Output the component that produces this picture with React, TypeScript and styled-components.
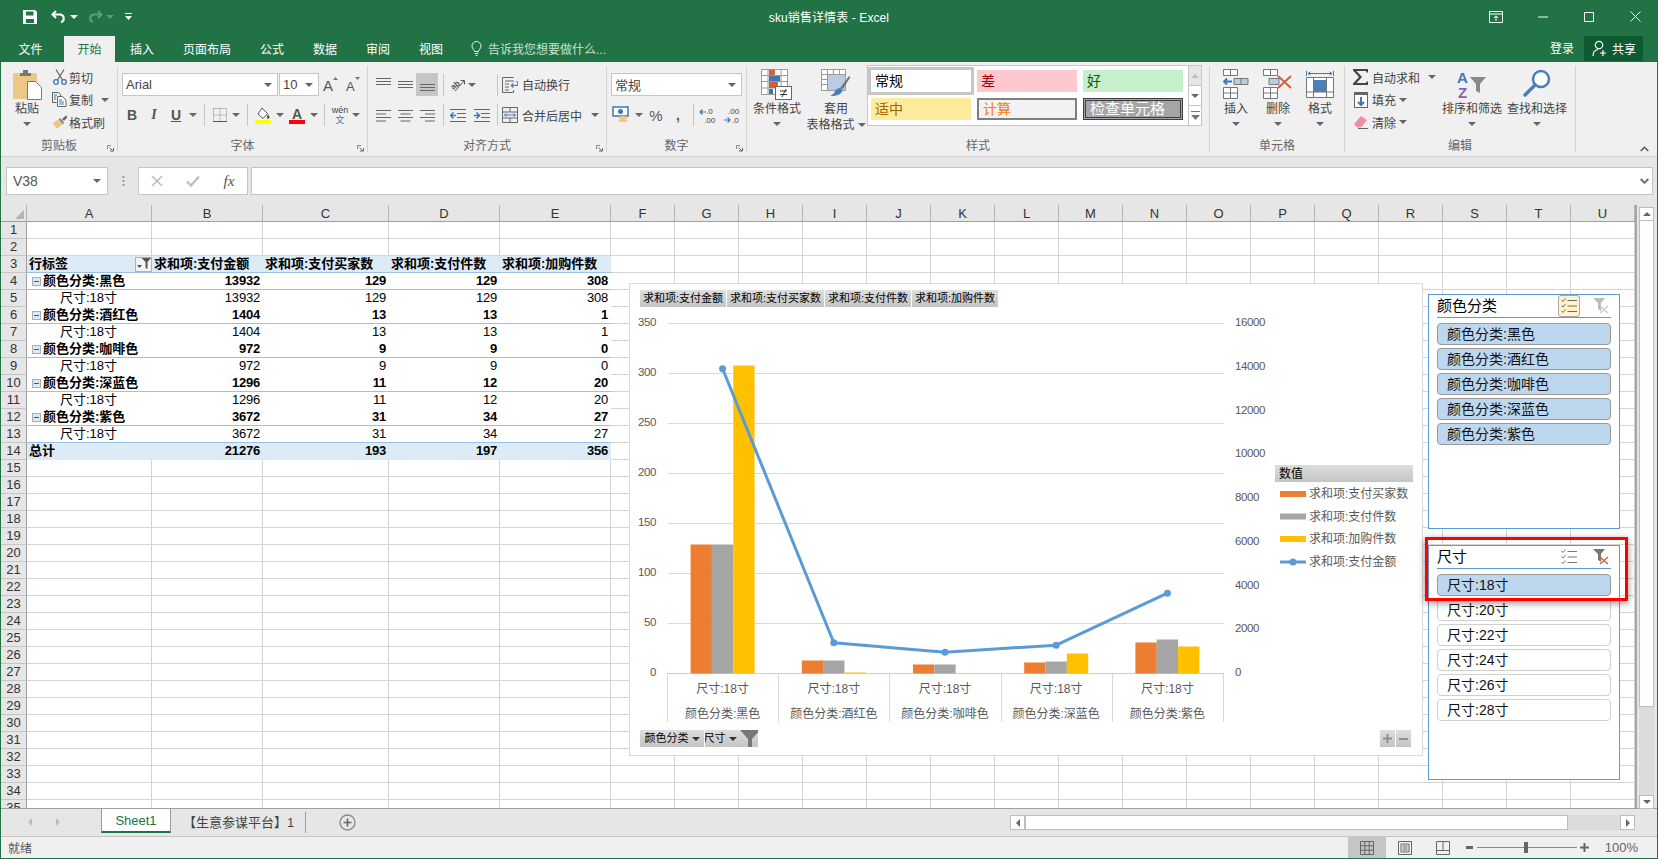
import React from 'react';
import styled, { createGlobalStyle } from 'styled-components';

const FONT = `"Liberation Sans", "Noto Sans CJK SC", sans-serif`;
const GREEN = '#217346';

const Global = createGlobalStyle`
  html, body { margin: 0; padding: 0; overflow: hidden; background: #fff; }
  #root { width: 1658px; height: 859px; }
  svg { display: block; flex-shrink: 0; }
`;

const Window = styled.div`
  width: 1658px; height: 859px; box-sizing: border-box;
  border: 1px solid ${GREEN};
  display: flex; flex-direction: column; overflow: hidden;
  font-family: ${FONT}; font-size: 12px; color: #444; background: #f0f0f0;
`;
const TitleBar = styled.div`
  height: 35px; box-sizing: border-box; padding-bottom: 4px; background: ${GREEN}; display: grid;
  grid-template-columns: 1fr auto 1fr; align-items: center;
`;
const Row = styled.div`display: flex; align-items: center;`;
const EndRow = styled(Row)`justify-content: flex-end; margin-right: -2px;`;
const Slot = styled.div<{ $w: number }>`
  width: ${p => p.$w}px; flex: none; display: flex; align-items: center; justify-content: center;
`;
const TallSlot = styled(Slot)`height: 26px;`;
const Title = styled.div`color: #fff; font-size: 12px; letter-spacing: .1px; white-space: nowrap;`;

const TabRow = styled.div`height: 26px; background: ${GREEN}; display: flex; align-items: stretch;`;
const RibbonTab = styled.div<{ $active?: boolean; $w: number; $ml?: number }>`
  width: ${p => p.$w}px; margin-left: ${p => p.$ml || 0}px; flex: none; box-sizing: border-box; padding-bottom: 2px;
  display: flex; align-items: center; justify-content: center;
  color: ${p => (p.$active ? GREEN : '#fff')};
  background: ${p => (p.$active ? '#f0f0f0' : 'transparent')};
`;
const TellMe = styled.div`display: flex; align-items: center; gap: 6px; margin-left: 14px; padding-bottom: 2px; color: #c6e3d0;`;
const Login = styled.div`margin-left: auto; color: #fff; align-self: center; padding-bottom: 3px;`;
const Share = styled.div`
  width: 59px; height: 25px; margin: 0 14px 1px 10px; background: #0f5b31; color: #fff;
  display: flex; align-items: center; gap: 3px; padding-left: 8px; box-sizing: border-box;
`;

const Ribbon = styled.div`
  height: 95px; box-sizing: border-box; border-bottom: 1px solid #d2d2d2; background: #f0f0f0;
  display: flex; align-items: flex-start; position: relative;
`;
const Group = styled.div<{ $w: number }>`
  width: ${p => p.$w}px; height: 86px; margin-top: 4px; box-sizing: border-box; flex: none;
  border-right: 1px solid #d4d4d4; display: flex; flex-direction: column; position: relative;
`;
const GroupBody = styled.div`flex: 1; display: flex; min-height: 0;`;
const GroupLabel = styled.div`
  height: 16px; line-height: 16px; text-align: center; color: #666; margin-bottom: -2px;
`;
const Launcher = styled.div`position: absolute; right: 3px; bottom: 0;`;
const Stack = styled.div<{ $pl: number }>`padding: 7px 0 0 ${p => p.$pl}px; display: flex; flex-direction: column; gap: 8px;`;
const ToolRow = styled.div<{ $h?: number }>`height: ${p => p.$h || 22}px; display: flex; align-items: center;`;
const Combo = styled.div<{ $w: number }>`
  width: ${p => p.$w}px; height: 23px; box-sizing: border-box; background: #fff; border: 1px solid #c6c6c6;
  display: flex; align-items: center; justify-content: space-between; padding: 0 5px 0 3px;
  font-size: 13px; color: #444; flex: none;
`;
const Sep = styled.div`width: 1px; height: 22px; background: #c6c6c6;`;
const ActiveSlot = styled(Slot)`height: 23px; background: #c6c6c6;`;
const BoldGlyph = styled.span`font-weight: 700; font-size: 14px; color: #555;`;
const ItalicGlyph = styled.span`font-style: italic; font-weight: 700; font-size: 14px; color: #555; font-family: "Liberation Serif", serif;`;
const UnderGlyph = styled.span`font-weight: 700; font-size: 14px; color: #555; text-decoration: underline;`;
const BigGlyph = styled.span`font-size: 15px; color: #555;`;
const ToolText = styled.span<{ $ml?: number }>`margin-left: ${p => p.$ml || 0}px; white-space: nowrap;`;
const CaretBox = styled.span<{ $ml: number }>`margin-left: ${p => p.$ml}px; display: inline-flex;`;

const BigBtn = styled.div<{ $w: number }>`
  width: ${p => p.$w}px; flex: none; display: flex; flex-direction: column; align-items: center; padding-top: 3px;
`;
const BigIcon = styled.div`height: 32px; display: flex; align-items: flex-start; justify-content: center;`;
const BigText = styled.div`height: 16px; line-height: 16px; white-space: nowrap; display: flex; align-items: center; gap: 3px;`;
const BigCaret = styled.div`height: 14px; display: flex; align-items: center;`;
const SmallCol = styled.div<{ $pl: number; $w: number }>`
  width: ${p => p.$w}px; box-sizing: border-box; padding-left: ${p => p.$pl}px; flex: none;
`;
const SmallRow = styled.div`height: 22.5px; display: flex; align-items: center;`;

const Gallery = styled.div`
  display: flex; height: 61px; margin: -1px 0 0 2px; box-sizing: border-box;
  border: 1px solid #c6c6c6; background: #fff; width: 335px;
`;
const StyleGrid = styled.div`
  width: 320px; box-sizing: border-box; padding: 4px 0 0 3px;
  display: grid; grid-template-columns: repeat(3, 100px); column-gap: 6px; row-gap: 6px; grid-auto-rows: 22px;
`;
const StyleCell = styled.div<{ $bg: string; $fg: string; $b?: string; $sel?: boolean; $big?: boolean }>`
  background: ${p => p.$bg}; color: ${p => p.$fg}; font-size: ${p => (p.$big ? 15 : 14)}px; line-height: 20px;
  padding-left: 4px; box-sizing: border-box; border: ${p => p.$b || 'none'};
  white-space: nowrap; overflow: hidden;
  display: flex; align-items: center;
  box-shadow: ${p => (p.$sel ? '0 0 0 3px #c6c6c6' : 'none')};
`;
const GalleryScroll = styled.div`display: flex; flex-direction: column; flex: 1; border-left: 1px solid #c6c6c6;`;
const ScrollCell = styled.div<{ $off?: boolean }>`
  flex: 1; display: flex; align-items: center; justify-content: center;
  background: ${p => (p.$off ? '#e6e6e6' : '#fff')}; border-bottom: 1px solid #c6c6c6;
  &:last-child { border-bottom: none; }
`;
const Collapse = styled.div`position: absolute; right: 8px; bottom: 4px;`;

const FormulaBar = styled.div`
  height: 48px; background: #e6e6e6; box-sizing: border-box; padding: 10px 0 0 5px; display: flex; align-items: flex-start;
`;
const NameBox = styled.div`
  width: 102px; height: 28px; box-sizing: border-box; background: #fff; border: 1px solid #c6c6c6;
  display: flex; align-items: center; justify-content: space-between; padding: 0 6px; font-size: 14px; color: #555;
`;
const Dots = styled.div`width: 30px; height: 28px; display: flex; align-items: center; justify-content: center;`;
const FxBox = styled.div`
  width: 110px; height: 28px; box-sizing: border-box; background: #fff; border: 1px solid #c6c6c6; display: flex; align-items: center;
`;
const FxText = styled.span`font-family: "Liberation Serif", serif; font-style: italic; font-size: 15px; color: #555;`;
const FormulaInput = styled.div`
  width: 1402px; height: 28px; margin-left: 3px; box-sizing: border-box; background: #fff; border: 1px solid #c6c6c6;
  display: flex; align-items: center; justify-content: flex-end; padding-right: 3px;
`;

const SheetArea = styled.div`height: 603px; display: flex; position: relative; background: #fff;`;
const Grid = styled.div`
  width: 1634px; flex: none; height: 603px; overflow: hidden; display: grid; align-content: start;
  grid-template-columns: 26px 125px 111px 126px 111px 111px repeat(16, 64px);
  grid-auto-rows: 17px;
`;
const ColHead = styled.div`
  box-sizing: border-box; background: #e6e6e6; border-right: 1px solid #b4b4b4; border-bottom: 1px solid #9f9f9f;
  font-size: 13px; color: #333; line-height: 17px; text-align: center;
`;
const Corner = styled(ColHead)`display: flex; align-items: flex-end; justify-content: flex-end; padding: 0 2px 2px 0;`;
const RowHead = styled.div`
  box-sizing: border-box; background: #e6e6e6; border-right: 1px solid #9f9f9f; border-bottom: 1px solid #c6c6c6;
  font-size: 13px; color: #333; line-height: 16px; text-align: center;
`;
const Cell = styled.div<{ $bg?: string; $line?: string; $bold?: boolean; $num?: boolean; $pivot?: boolean }>`
  box-sizing: border-box; background: ${p => p.$bg || '#fff'};
  border-right: ${p => (p.$pivot ? 'none' : '1px solid #d4d4d4')};
  border-bottom: 1px solid ${p => p.$line || '#d4d4d4'};
  font-size: 13px; color: #000; line-height: 16px; white-space: nowrap; overflow: hidden;
  font-weight: ${p => (p.$bold ? 700 : 400)};
  letter-spacing: ${p => (p.$num ? '-.2px' : '0')};
  padding: 0 ${p => (p.$num ? 3 : 0)}px 0 ${p => (p.$num ? 0 : 2)}px;
  display: flex; align-items: center; justify-content: ${p => (p.$num ? 'flex-end' : 'flex-start')};
`;
const HeadLabel = styled.span`padding-left: 0;`;
const FilterBtn = styled.span`
  margin-left: auto; margin-right: 0; width: 17px; height: 15px; box-sizing: border-box; flex: none;
  border: 1px solid #b0b0b0; background: #f4f4f4; display: flex; align-items: center; justify-content: center;
`;
const Expander = styled.span`
  width: 9px; height: 9px; box-sizing: border-box; border: 1px solid #9db2c6; background: #dfe7ef; margin: 0 2px 0 3px;
  display: inline-flex; align-items: center; justify-content: center; flex: none;
`;
const ExpanderBar = styled.span`width: 5px; height: 1px; background: #4a5a6a;`;
const Indent = styled.span`padding-left: 31px;`;

const VScroll = styled.div`
  width: 22px; flex: none; box-sizing: border-box; border-left: 2px solid #a6a6a6; background: #e6e6e6;
  padding: 2px 0 0 2px; display: flex; flex-direction: column;
`;
const ScrollBtn = styled.div`
  width: 15px; height: 14px; box-sizing: border-box; background: #fff; border: 1px solid #bdbdbd; flex: none;
  display: flex; align-items: center; justify-content: center;
`;
const HScrollBtn = styled(ScrollBtn)`height: 15px;`;
const VThumb = styled.div`width: 15px; height: 486px; box-sizing: border-box; background: #fff; border: 1px solid #bdbdbd; border-top: none; flex: none;`;
const VTrack = styled.div`width: 15px; height: 88px; background: #dcdcdc; flex: none;`;

const ChartFrame = styled.div`
  position: absolute; left: 628px; top: 78px; width: 794px; height: 473px; box-sizing: border-box;
  background: #fff; border: 1px solid #d9d9d9; display: flex; flex-direction: column;
`;
const FieldRow = styled.div`display: flex; gap: 1px; padding: 6px 0 0 10px;`;
const FieldBtn = styled.div<{ $w: number }>`
  width: ${p => p.$w}px; height: 17px; flex: none; box-sizing: border-box;
  background: linear-gradient(180deg, #dedede, #c4c4c4);
  font-size: 11px; line-height: 17px; color: #000; white-space: nowrap; display: flex; align-items: center; justify-content: center; gap: 3px; overflow: hidden;
`;
const ChartSvg = styled.svg`font-family: ${FONT}; font-size: 12px;`;
const ChartFoot = styled.div`display: flex; gap: 1px; padding-left: 10px; align-items: flex-start; padding-right: 11px;`;
const ZoomBtns = styled.div`margin-left: auto; display: flex; gap: 1px;`;

const Slicer = styled.div<{ $top: number }>`
  position: absolute; left: 1427px; top: ${p => p.$top}px; width: 192px; height: 235px; box-sizing: border-box;
  background: #fff; border: 1px solid #5b9bd5; padding: 0 8px;
`;
const SlicerHead = styled.div`
  height: 23px; box-sizing: border-box; border-bottom: 1px solid #5b9bd5; display: flex; align-items: center;
  font-size: 15px; color: #000; padding-right: 2px;
`;
const SlicerName = styled.span`margin-top: -4px; white-space: nowrap;`;
const SlicerMulti = styled.div<{ $on?: boolean }>`
  width: 22px; height: 22px; box-sizing: border-box; margin-left: auto; margin-right: 13px; border-radius: 3px;
  display: flex; align-items: center; justify-content: center;
  background: ${p => (p.$on ? '#fff2cc' : 'transparent')}; border: 1px solid ${p => (p.$on ? '#a9a9a9' : 'transparent')};
`;
const SlicerList = styled.div`display: flex; flex-direction: column; gap: 3px; margin-top: 5px;`;
const SlicerItem = styled.div<{ $on?: boolean }>`
  height: 22px; box-sizing: border-box; border-radius: 4px; padding-left: 9px; font-size: 14px; line-height: 20px; color: #111;
  border: 1px solid ${p => (p.$on ? '#9a9a9a' : '#d0d0d0')}; background: ${p => (p.$on ? '#bdd7ee' : '#fff')}; white-space: nowrap;
`;
const RedMark = styled.div`
  position: absolute; left: 1424px; top: 332px; width: 203px; height: 64px; box-sizing: border-box;
  border: 3px solid #ff0000; box-shadow: 0 2px 7px rgba(0,0,0,.45);
`;

const TabBar = styled.div`
  height: 28px; box-sizing: border-box; background: #e6e6e6; border-top: 1px solid #9f9f9f; display: flex; align-items: flex-start;
`;
const SheetTab = styled.div`
  margin-left: 4px; width: 70px; height: 24px; box-sizing: border-box; background: #fff; color: ${GREEN}; font-size: 13px;
  border-left: 1px solid #9f9f9f; border-right: 1px solid #9f9f9f; border-bottom: 2px solid ${GREEN};
  display: flex; align-items: center; justify-content: center;
`;
const OtherTab = styled.div`
  width: 134px; height: 24px; box-sizing: border-box; padding-left: 12px; color: #444; font-size: 13px; display: flex; align-items: center; white-space: nowrap; flex: none;
`;
const TabSep = styled.div`width: 1px; height: 21px; margin-top: 3px; background: #9f9f9f;`;
const HScroll = styled.div`margin-left: auto; margin-right: 22px; margin-top: 6px; display: flex; height: 15px;`;
const HThumb = styled.div`width: 543px; box-sizing: border-box; background: #fff; border: 1px solid #bdbdbd;`;
const HTrack = styled.div`width: 52px; background: #dcdcdc;`;

const StatusBar = styled.div`
  height: 22px; box-sizing: border-box; background: #f0f0f0; border-top: 1px solid #c6c6c6; display: flex; align-items: center; padding-left: 7px; color: #555;
`;
const StatusRight = styled.div`margin-left: auto; display: flex; align-items: center; height: 21px; padding-right: 19px;`;
const ViewBtn = styled.div<{ $on?: boolean }>`
  width: 38px; height: 21px; display: flex; align-items: center; justify-content: center; background: ${p => (p.$on ? '#c6c6c6' : 'transparent')};
`;
const ZoomTrack = styled.div`width: 100px; height: 1px; background: #8a8a8a; position: relative;`;
const ZoomThumb = styled.div`position: absolute; left: 47px; top: -5px; width: 4px; height: 11px; background: #666;`;
const ZoomText = styled.div`margin-left: 12px; font-size: 13px; color: #666;`;

/* ---- icons ---- */
const Caret = ({ c = '#666' }: { c?: string }) => (
  <svg width="8" height="4" viewBox="0 0 8 4"><path d="M0 0h8L4 4z" fill={c} /></svg>
);
const Save = () => (
  <svg width="16" height="16" viewBox="0 0 16 16"><path fillRule="evenodd" fill="#fff" d="M1 1h12l2 2v12H1zM4 2.500v4h7.500v-4zM4 10v4h8v-4z" /></svg>
);
const Undo = () => (
  <svg width="16" height="14" viewBox="0 0 16 14"><path d="M5 1 1.500 4.500 5 8M2 4.500h7a4 4 0 0 1 1 7.800" fill="none" stroke="#fff" strokeWidth="2" /></svg>
);
const Redo = () => (
  <svg width="16" height="14" viewBox="0 0 16 14" opacity={0.28}><path d="M11 1l3.500 3.500L11 8M14 4.500H7a4 4 0 0 0-1 7.800" fill="none" stroke="#fff" strokeWidth="2" /></svg>
);
const Customize = () => (
  <svg width="7" height="7" viewBox="0 0 7 7"><path d="M0 0h7v1H0zM0 3h7L3.500 7z" fill="#fff" /></svg>
);
const RibbonDisplay = () => (
  <svg width="14" height="12" viewBox="0 0 14 12"><path d="M.5.500h13v11H.5zM.5 3h13M7 10V5M4.800 7 7 4.800 9.200 7" fill="none" stroke="#fff" /></svg>
);
const Minimize = () => <svg width="10" height="10" viewBox="0 0 10 10"><path d="M0 5h10" stroke="#fff" /></svg>;
const Maximize = () => <svg width="10" height="10" viewBox="0 0 10 10"><path d="M.5.500h9v9h-9z" fill="none" stroke="#fff" /></svg>;
const Close = () => <svg width="11" height="11" viewBox="0 0 11 11"><path d="M.5.500l10 10M10.500.500l-10 10" stroke="#fff" /></svg>;
const Bulb = () => (
  <svg width="11" height="15" viewBox="0 0 11 15"><path d="M3.500 10.500C3.500 8.500 1 8 1 5a4.500 4.500 0 0 1 9 0c0 3-2.500 3.500-2.500 5.500zM3.800 12.500h3.400M4.500 14.500h2" fill="none" stroke="#e6f2ea" /></svg>
);
const ShareIcon = () => (
  <svg width="17" height="17" viewBox="0 0 17 17"><circle cx="7" cy="5" r="3.700" fill="none" stroke="#fff" strokeWidth="1.200" /><path d="M1 16c0-4 2-6 5-6.500M11 10v6M8 13h6" fill="none" stroke="#fff" strokeWidth="1.200" /></svg>
);
const Paste = () => (
  <svg width="29" height="31" viewBox="0 0 29 31">
    <rect x="0" y="4" width="24" height="26" rx="1.500" fill="#efc784" />
    <path d="M7 4h3V1h5v3h3v3H7z" fill="#777" />
    <path d="M14.500 12.500h8l6 6v12h-14z" fill="#fff" stroke="#777" />
  </svg>
);
const Scissors = () => (
  <svg width="14" height="16" viewBox="0 0 14 16">
    <circle cx="3" cy="13" r="2.300" fill="none" stroke="#3f76b4" strokeWidth="1.300" />
    <circle cx="11" cy="13" r="2.300" fill="none" stroke="#3f76b4" strokeWidth="1.300" />
    <path d="M4.500 11 11 .5M9.500 11 3 .5" stroke="#666" strokeWidth="1.300" />
  </svg>
);
const Copy = () => (
  <svg width="15" height="15" viewBox="0 0 15 15">
    <path d="M.5.500h6l2 2v3M.5.500v10h4" fill="none" stroke="#666" />
    <path d="M5.500 4.500h5l3.500 3.500v6.500H5.500z" fill="#fff" stroke="#666" />
    <path d="M7 8h3M7 10h5M7 12h5M2 3h3M2 5h2M2 7h2" stroke="#3f76b4" />
  </svg>
);
const Brush = () => (
  <svg width="16" height="14" viewBox="0 0 16 14">
    <path d="M1 7.500 7 4l4 5-5.500 4.500C4 13.500 1.500 10 1 7.500z" fill="#efc784" />
    <path d="M7 4l4 5 1-1-4-5zM10 4l4-3.500 1.500 1.500L12 6z" fill="#666" />
  </svg>
);
const FontGrow = () => (
  <svg width="22" height="17" viewBox="0 0 22 17">
    <text x="4" y="15" fontSize="15" fill="#555" fontFamily="Liberation Sans">A</text>
    <path d="M14 4l2.500-3L19 4z" fill="#4a7fb8" />
  </svg>
);
const FontShrink = () => (
  <svg width="22" height="17" viewBox="0 0 22 17">
    <text x="5" y="15" fontSize="13" fill="#555" fontFamily="Liberation Sans">A</text>
    <path d="M14 1l2.500 3L19 1z" fill="#4a7fb8" />
  </svg>
);
const Borders = () => (
  <svg width="14" height="14" viewBox="0 0 14 14">
    <path d="M.5.500h13v13M.5.500v13M7 .5v13M.5 7h13" fill="none" stroke="#888" strokeDasharray="1 1" />
    <path d="M0 13.500h14" stroke="#555" />
  </svg>
);
const FillColor = () => (
  <svg width="16" height="17" viewBox="0 0 16 17">
    <path d="M7 1l5.500 5.500-4.500 5L3 7z" fill="#fff" stroke="#555" />
    <path d="M13 7c1 1.500 1.500 2.500 1.500 3.500a1.300 1.300 0 0 1-2.600 0c0-1 .5-2 1.100-3.500z" fill="#555" />
    <rect y="13" width="16" height="4" fill="#ffff00" />
  </svg>
);
const FontColor = () => (
  <svg width="16" height="17" viewBox="0 0 16 17">
    <text x="3" y="12" fontSize="14" fontWeight="700" fill="#555" fontFamily="Liberation Sans">A</text>
    <rect y="13" width="16" height="4" fill="#ff0000" />
  </svg>
);
const Phonetic = () => (
  <svg width="18" height="18" viewBox="0 0 18 18" style={{ overflow: 'visible' }}>
    <text x="9" y="7" textAnchor="middle" fontSize="9" fill="#444" fontFamily="Liberation Sans">wén</text>
    <text x="9" y="17" textAnchor="middle" fontSize="9" fill="#3f76b4" fontFamily="Noto Sans CJK SC">文</text>
  </svg>
);
const AlignBars = ({ a, y }: { a: 'l' | 'c' | 'r'; y: number }) => {
  const ws = [15, 10, 15, 10];
  return (
    <svg width="15" height="13" viewBox="0 0 15 13">
      {ws.map((w, i) => (
        <rect key={i} x={a === 'l' ? 0 : a === 'c' ? (15 - w) / 2 : 15 - w} y={y + i * 3.5} width={w} height="1" fill="#666" />
      ))}
    </svg>
  );
};
const VBars = ({ y }: { y: number }) => (
  <svg width="15" height="13" viewBox="0 0 15 13">
    {[0, 3, 6].map(d => <rect key={d} x="0" y={y + d} width="15" height="1" fill="#666" />)}
  </svg>
);
const Orient = () => (
  <svg width="16" height="16" viewBox="0 0 16 16">
    <text x="1" y="11" fontSize="8" fontWeight="700" fill="#555" transform="rotate(-40 5 9)" fontFamily="Liberation Sans">ab</text>
    <path d="M5 14 14 4M10.500 3.500H14.500V7.500" fill="none" stroke="#555" />
  </svg>
);
const Indent1 = ({ rev }: { rev?: boolean }) => (
  <svg width="16" height="13" viewBox="0 0 16 13">
    <path d="M0 .5h16M7 4.500h9M7 8.500h9M0 12.500h16" stroke="#666" />
    {rev
      ? <path d="M0 6.500h5M2.500 3.500 5.500 6.500 2.500 9.500" fill="none" stroke="#3f76b4" strokeWidth="1.500" />
      : <path d="M1 6.500h5M3.500 3.500.5 6.500l3 3" fill="none" stroke="#3f76b4" strokeWidth="1.500" />}
  </svg>
);
const WrapIcon = () => (
  <svg width="16" height="16" viewBox="0 0 16 16">
    <path d="M.5.500h11M.5.500v15h11V13M3 4h9M3 7h4M3 10h4M3 13h4" fill="none" stroke="#666" />
    <path d="M9 8.500h5a1 1 0 0 0 0-4M9 8.500l2.500-2M9 8.500l2.500 2" fill="none" stroke="#3f76b4" strokeWidth="1.200" />
  </svg>
);
const MergeIcon = () => (
  <svg width="16" height="16" viewBox="0 0 16 16">
    <path d="M.5.500h15v15H.5zM.5 5h15M.5 11h15M8 .5V5M8 11v4.500" fill="none" stroke="#666" />
    <path d="M2.500 8h11M4.500 6.500 2.500 8l2 1.500M11.500 6.500l2 1.500-2 1.500" fill="none" stroke="#3f76b4" />
  </svg>
);
const Currency = () => (
  <svg width="18" height="18" viewBox="0 0 18 18">
    <rect x="1" y="1" width="15" height="9" fill="#fff" stroke="#3f76b4" strokeWidth="1.500" />
    <circle cx="8.500" cy="5.500" r="2.500" fill="#3f76b4" />
    <ellipse cx="11" cy="11.500" rx="4.500" ry="1.500" fill="#efc784" />
    <ellipse cx="11" cy="14.500" rx="4.500" ry="1.500" fill="#efc784" />
  </svg>
);
const DecMore = () => (
  <svg width="18" height="17" viewBox="0 0 18 17">
    <text x="7" y="7" fontSize="8" fill="#444" fontFamily="Liberation Sans">.0</text>
    <text x="5" y="16" fontSize="8" fill="#444" fontFamily="Liberation Sans">.00</text>
    <path d="M1 5h6M3.500 2.500 1 5l2.500 2.500" fill="none" stroke="#3f76b4" strokeWidth="1.200" />
  </svg>
);
const DecLess = () => (
  <svg width="18" height="17" viewBox="0 0 18 17">
    <text x="5" y="7" fontSize="8" fill="#444" fontFamily="Liberation Sans">.00</text>
    <text x="9" y="16" fontSize="8" fill="#444" fontFamily="Liberation Sans">.0</text>
    <path d="M1 13h6M4.500 10.500 7 13l-2.500 2.500" fill="none" stroke="#3f76b4" strokeWidth="1.200" />
  </svg>
);
const CondFormat = () => (
  <svg width="32" height="32" viewBox="0 0 32 32">
    <path d="M.5.500h26v25H.5zM7 .5v25M20 .5v25M.5 6.500h26M.5 12.500h26M.5 19h26" fill="#fff" stroke="#9a9a9a" />
    <rect x="8" y="1" width="6" height="5" fill="#d2603e" />
    <rect x="8" y="7" width="11" height="5" fill="#3f76b4" />
    <rect x="8" y="13" width="9" height="6" fill="#d2603e" />
    <rect x="8" y="20" width="4" height="5" fill="#3f76b4" />
    <rect x="14.500" y="17.500" width="16" height="13" fill="#fff" stroke="#666" />
    <path d="M19 22h7M19 25.500h7M25 20l-4 8" stroke="#333" />
  </svg>
);
const TableFormat = () => (
  <svg width="30" height="30" viewBox="0 0 30 30">
    <path d="M.5.500h24v21H.5zM6.500.5v21M12.500.5v21M18.500.5v21M.5 5.500h24M.5 10.500h24M.5 15.500h24" fill="#fff" stroke="#9a9a9a" />
    <rect x="7" y="6" width="17" height="15" fill="#b8cce4" />
    <path d="M19 19 28 7l1.500 1L22 20z" fill="#777" />
    <path d="M14 22c2-3 6-4 7-2s-1 5-4 6-5 1-8 1c2-1 4-2 5-5z" fill="#4a7fb8" />
  </svg>
);
const InsertCells = () => (
  <svg width="26" height="30" viewBox="0 0 26 30">
    <path d="M.5.500h14v6H.5zM7.500.5v6M.5 18.500h14v11H.5zM7.500 18.500v11M.5 24h14" fill="#fff" stroke="#777" />
    <path d="M11 9.500h14v6H11zM18 9.500v6" fill="#b8cce4" stroke="#777" />
    <path d="M9 12.500H1M4 9.500l-3 3 3 3" fill="none" stroke="#3f76b4" strokeWidth="1.800" />
  </svg>
);
const DeleteCells = () => (
  <svg width="30" height="30" viewBox="0 0 30 30">
    <path d="M.5.500h14v6H.5zM7.500.5v6M.5 18.500h14v11H.5zM7.500 18.500v11M.5 24h14" fill="#fff" stroke="#777" />
    <path d="M6 9.500h10v6H6z" fill="#b8cce4" stroke="#777" />
    <path d="M15 7l13 12M28 7 15 19" stroke="#d2603e" strokeWidth="2" />
  </svg>
);
const FormatCells = () => (
  <svg width="28" height="31" viewBox="0 0 28 31">
    <path d="M.5 2v5M27.500 2v5M2 4.500h24M2 4.500l2.500-1.500M2 4.500l2.500 1.500M26 4.500l-2.500-1.500M26 4.500l-2.500 1.500" fill="none" stroke="#3f76b4" />
    <path d="M.5 8.500h27v20H.5zM7.500 8.500v20M20.500 8.500v20M.5 23h27" fill="#fff" stroke="#777" />
    <rect x="8" y="11" width="12" height="12" fill="#4a7fb8" />
  </svg>
);
const Sigma = () => (
  <svg width="15" height="16" viewBox="0 0 15 16"><path d="M0 0h15v3.500h-1.500L13 2H3.500L9 8l-5.500 6H13l.5-1.500H15V16H0v-1.500L6 8 0 1.500z" fill="#444" /></svg>
);
const FillDown = () => (
  <svg width="14" height="16" viewBox="0 0 14 16">
    <rect x=".5" y=".5" width="13" height="15" fill="#fff" stroke="#666" />
    <rect width="14" height="3" fill="#666" />
    <path d="M7 5v8M4 10l3 3 3-3" fill="none" stroke="#3f76b4" strokeWidth="2" />
  </svg>
);
const Eraser = () => (
  <svg width="15" height="14" viewBox="0 0 15 14">
    <path d="M1 9l7-8 6 4-6 7.500H4z" fill="#ef8fa0" />
    <path d="M5 13.500h10" stroke="#666" />
  </svg>
);
const SortFilter = () => (
  <svg width="30" height="30" viewBox="0 0 30 30">
    <text x="0" y="14" fontSize="15" fontWeight="700" fill="#3f76b4" fontFamily="Liberation Sans">A</text>
    <text x="1" y="29" fontSize="15" fontWeight="700" fill="#8d5fb4" fontFamily="Liberation Sans">Z</text>
    <path d="M13 8h16l-6 7v9l-4-2v-7z" fill="#888" />
  </svg>
);
const FindIcon = () => (
  <svg width="28" height="30" viewBox="0 0 28 30">
    <circle cx="18" cy="10" r="8" fill="#fff" stroke="#4a7fb8" strokeWidth="2.500" />
    <path d="M12 16 2 26" stroke="#4a7fb8" strokeWidth="3.500" strokeLinecap="round" />
  </svg>
);
const LauncherIcon = () => (
  <svg width="7" height="7" viewBox="0 0 7 7"><path d="M.5 4V.5H4" fill="none" stroke="#888" /><path d="M2.500 2.500 6 6M3 6h3.500V3" fill="none" stroke="#666" /></svg>
);
const Chevron = () => (
  <svg width="9" height="6" viewBox="0 0 9 6"><path d="M.7 5 4.500 1.200 8.300 5" fill="none" stroke="#555" strokeWidth="1.500" /></svg>
);
const ChevronDown = () => (
  <svg width="9" height="6" viewBox="0 0 9 6"><path d="M.7 1 4.500 4.800 8.300 1" fill="none" stroke="#666" strokeWidth="1.800" /></svg>
);
const FilterDrop = () => (
  <svg width="14" height="12" viewBox="0 0 14 12"><path d="M4.500 0H14l-3.500 4v7l-2-1V4zM0 7h5L2.500 10z" fill="#555" /></svg>
);
const MultiSelect = ({ c = '#777' }: { c?: string }) => (
  <svg width="16" height="16" viewBox="0 0 16 16">
    <path d="M.5 2 2 3.500 4.500.5M.5 7.500 2 9l2.500-3M.5 13 2 14.500 4.500 11.500M6.500 2.500H16M6.500 8H16M6.500 13.500H16" fill="none" stroke={c} />
  </svg>
);
const ClearFilter = ({ on }: { on?: boolean }) => (
  <svg width="16" height="16" viewBox="0 0 16 16">
    <path d="M0 0h12L8 5v8L5 11V5z" fill={on ? '#777' : '#bbb'} />
    <path d="M7 8l8 7M15 8l-8 7" stroke={on ? '#d2603e' : '#ccc'} strokeWidth="1.400" />
  </svg>
);
const Triangle = ({ dir, c = '#666' }: { dir: 'u' | 'd' | 'l' | 'r'; c?: string }) => (
  <svg width="8" height="8" viewBox="0 0 8 8">
    <path fill={c} d={dir === 'u' ? 'M0 6h8L4 2z' : dir === 'd' ? 'M0 2h8L4 6z' : dir === 'l' ? 'M6 0v8L2 4z' : 'M2 0v8l4-4z'} />
  </svg>
);
const MoreDown = () => (
  <svg width="9" height="9" viewBox="0 0 9 9"><path d="M0 0h9v1H0zM0 4h9L4.500 9z" fill="#777" /></svg>
);
const CornerTri = () => <svg width="9" height="9" viewBox="0 0 9 9"><path d="M9 0v9H0z" fill="#b4b4b4" /></svg>;
const PlusCircle = () => (
  <svg width="17" height="17" viewBox="0 0 17 17"><circle cx="8.500" cy="8.500" r="7.500" fill="none" stroke="#8a8a8a" strokeWidth="1.300" /><path d="M4.500 8.500h8M8.500 4.500v8" stroke="#666" strokeWidth="1.600" /></svg>
);
const GridView = () => (
  <svg width="14" height="14" viewBox="0 0 14 14"><path d="M.5.500h13v13H.5zM4.800.5v13M9.200.5v13M.5 4.800h13M.5 9.200h13" fill="none" stroke="#666" /></svg>
);
const PageView = () => (
  <svg width="14" height="14" viewBox="0 0 14 14"><path d="M.5.500h13v13H.5zM3 3h8v8H3zM4.500 5h5M4.500 7h5M4.500 9h5" fill="none" stroke="#666" /></svg>
);
const BreakView = () => (
  <svg width="14" height="14" viewBox="0 0 14 14"><path d="M.5.500h13v13H.5zM.5 9.500h13M7 .5v9" fill="none" stroke="#666" /></svg>
);
const Minus = () => <svg width="7" height="3" viewBox="0 0 7 3"><rect width="7" height="3" fill="#666" /></svg>;
const Plus = () => <svg width="9" height="9" viewBox="0 0 9 9"><path d="M0 3.500h9v2H0zM3.500 0h2v9h-2z" fill="#666" /></svg>;
const ChartFunnel = () => (
  <svg width="20" height="17" viewBox="0 0 20 17"><path d="M0 0h20l-8 9v8H8V9z" fill="#777" /></svg>
);
const ZoomPlus = () => <svg width="9" height="9" viewBox="0 0 9 9"><path d="M0 3.500h9v2H0zM3.500 0h2v9h-2z" fill="#8f8f8f" /></svg>;
const ZoomMinus = () => <svg width="9" height="2" viewBox="0 0 9 2"><rect width="9" height="2" fill="#8f8f8f" /></svg>;

/* ---- data ---- */
const colNames = 'ABCDEFGHIJKLMNOPQRSTU'.split('');
type PivotRow = { label: string; kind: 'head' | 'group' | 'leaf' | 'total'; v: (string | number)[] };
const pivot: Record<number, PivotRow> = {
  3: { label: '行标签', kind: 'head', v: ['求和项:支付金额', '求和项:支付买家数', '求和项:支付件数', '求和项:加购件数'] },
  4: { label: '颜色分类:黑色', kind: 'group', v: [13932, 129, 129, 308] },
  5: { label: '尺寸:18寸', kind: 'leaf', v: [13932, 129, 129, 308] },
  6: { label: '颜色分类:酒红色', kind: 'group', v: [1404, 13, 13, 1] },
  7: { label: '尺寸:18寸', kind: 'leaf', v: [1404, 13, 13, 1] },
  8: { label: '颜色分类:咖啡色', kind: 'group', v: [972, 9, 9, 0] },
  9: { label: '尺寸:18寸', kind: 'leaf', v: [972, 9, 9, 0] },
  10: { label: '颜色分类:深蓝色', kind: 'group', v: [1296, 11, 12, 20] },
  11: { label: '尺寸:18寸', kind: 'leaf', v: [1296, 11, 12, 20] },
  12: { label: '颜色分类:紫色', kind: 'group', v: [3672, 31, 34, 27] },
  13: { label: '尺寸:18寸', kind: 'leaf', v: [3672, 31, 34, 27] },
  14: { label: '总计', kind: 'total', v: [21276, 193, 197, 356] },
};
const BLUE_LINE = '#9bc2e6';
const rowLine = (r: number) => ([3, 4, 6, 8, 10, 12, 13].includes(r) ? BLUE_LINE : r === 14 ? '#ddebf7' : '#fff');

const SheetCells = () => {
  const out: React.ReactNode[] = [];
  out.push(<Corner key="corner"><CornerTri /></Corner>);
  colNames.forEach(c => out.push(<ColHead key={c}>{c}</ColHead>));
  for (let r = 1; r <= 35; r++) {
    out.push(<RowHead key={`h${r}`}>{r}</RowHead>);
    const p = pivot[r];
    colNames.forEach((c, i) => {
      const key = `${c}${r}`;
      if (p && i < 5) {
        const bg = p.kind === 'head' || p.kind === 'total' ? '#ddebf7' : '#fff';
        const bold = p.kind !== 'leaf';
        if (i === 0) {
          out.push(
            <Cell key={key} $pivot $bg={bg} $line={rowLine(r)} $bold={bold}>
              {p.kind === 'group' && <Expander><ExpanderBar /></Expander>}
              {p.kind === 'leaf' ? <Indent>{p.label}</Indent> : <HeadLabel>{p.label}</HeadLabel>}
              {p.kind === 'head' && <FilterBtn><FilterDrop /></FilterBtn>}
            </Cell>
          );
        } else {
          out.push(
            <Cell key={key} $pivot $bg={bg} $line={rowLine(r)} $bold={bold} $num={p.kind !== 'head'}>
              {p.v[i - 1]}
            </Cell>
          );
        }
      } else {
        out.push(<Cell key={key} />);
      }
    });
  }
  return <>{out}</>;
};

/* ---- chart ---- */
const cats = ['颜色分类:黑色', '颜色分类:酒红色', '颜色分类:咖啡色', '颜色分类:深蓝色', '颜色分类:紫色'];
const bars = [[129, 129, 308], [13, 13, 1], [9, 9, 0], [11, 12, 20], [31, 34, 27]];
const line = [13932, 1404, 972, 1296, 3672];
const barColors = ['#ed7d31', '#a5a5a5', '#ffc000'];
const X0 = 667, CW = 111.2, BASE = 673.5;
const center = (i: number) => X0 + CW * i + CW / 2;
const lineY = (v: number) => BASE - (v * 350) / 16000;
const legend = ['求和项:支付买家数', '求和项:支付件数', '求和项:加购件数', '求和项:支付金额'];

const Plot = () => (
  <ChartSvg width="792" height="423" viewBox="630 307 792 423">
    <defs>
      <linearGradient id="lg" x1="0" x2="0" y1="0" y2="1">
        <stop offset="0" stopColor="#dedede" /><stop offset="1" stopColor="#c4c4c4" />
      </linearGradient>
    </defs>
    {[0, 1, 2, 3, 4, 5, 6].map(i => (
      <line key={i} x1="668" x2="1224" y1={323.5 + i * 50} y2={323.5 + i * 50} stroke="#d9d9d9" />
    ))}
    <line x1="667" x2="1224" y1={BASE} y2={BASE} stroke="#d0d0d0" />
    {[0, 1, 2, 3, 4, 5].map(i => (
      <line key={i} x1={Math.round(X0 + CW * i) + 0.5} x2={Math.round(X0 + CW * i) + 0.5} y1="674" y2="722" stroke="#d9d9d9" />
    ))}
    {[350, 300, 250, 200, 150, 100, 50, 0].map((v, i) => (
      <text key={v} x="656" y={326 + i * 50} textAnchor="end" fontSize="11.5" letterSpacing="-.4" fill="#595959">{v}</text>
    ))}
    {[16000, 14000, 12000, 10000, 8000, 6000, 4000, 2000, 0].map((v, i) => (
      <text key={v} x="1235" y={326 + i * 43.75} fontSize="11.5" letterSpacing="-.4" fill="#595959">{v}</text>
    ))}
    {bars.map((g, i) => g.map((v, j) => (
      <rect key={`${i}${j}`} x={center(i) - 32 + j * 21.33} y={BASE - v} width="21.33" height={v} fill={barColors[j]} />
    )))}
    <polyline points={line.map((v, i) => `${center(i)},${lineY(v)}`).join(' ')} fill="none" stroke="#5b9bd5" strokeWidth="3" strokeLinejoin="round" />
    {line.map((v, i) => <circle key={i} cx={center(i)} cy={lineY(v)} r="3.5" fill="#5b9bd5" />)}
    {cats.map((c, i) => (
      <g key={c} fill="#595959" textAnchor="middle">
        <text x={center(i)} y="693">尺寸:18寸</text>
        <text x={center(i)} y="718">{c}</text>
      </g>
    ))}
    <rect x="1275" y="465" width="138" height="17" fill="url(#lg)" />
    <text x="1279" y="478" fill="#000">数值</text>
    {legend.map((t, i) => (
      <g key={t}>
        {i < 3
          ? <rect x="1280" y={491 + i * 22.5} width="26" height="6" fill={barColors[i]} />
          : <><line x1="1280" x2="1306" y1="562" y2="562" stroke="#5b9bd5" strokeWidth="3" /><circle cx="1293" cy="562" r="3.5" fill="#5b9bd5" /></>}
        <text x="1309" y={498 + i * 22.5} fill="#595959">{t}</text>
      </g>
    ))}
  </ChartSvg>
);

const Group1 = () => (
  <Group $w={117}>
    <GroupBody>
      <BigBtn $w={52}>
        <BigIcon><Paste /></BigIcon>
        <BigText>粘贴</BigText>
        <BigCaret><Caret /></BigCaret>
      </BigBtn>
      <SmallCol $pl={0} $w={64}>
        <SmallRow><Slot $w={13}><Scissors /></Slot><ToolText $ml={3}>剪切</ToolText></SmallRow>
        <SmallRow><Slot $w={13}><Copy /></Slot><ToolText $ml={3}>复制</ToolText><CaretBox $ml={8}><Caret /></CaretBox></SmallRow>
        <SmallRow><Slot $w={13}><Brush /></Slot><ToolText $ml={3}>格式刷</ToolText></SmallRow>
      </SmallCol>
    </GroupBody>
    <GroupLabel>剪贴板</GroupLabel>
    <Launcher><LauncherIcon /></Launcher>
  </Group>
);

const Group2 = () => (
  <Group $w={250}>
    <GroupBody>
      <Stack $pl={4}>
        <ToolRow $h={23}>
          <Combo $w={156}>Arial<Caret /></Combo>
          <Slot $w={1} />
          <Combo $w={40}>10<Caret /></Combo>
          <Slot $w={22}><FontGrow /></Slot>
          <Slot $w={22}><FontShrink /></Slot>
        </ToolRow>
        <ToolRow>
          <Slot $w={20}><BoldGlyph>B</BoldGlyph></Slot>
          <Slot $w={24}><ItalicGlyph>I</ItalicGlyph></Slot>
          <Slot $w={20}><UnderGlyph>U</UnderGlyph></Slot>
          <Slot $w={14}><Caret /></Slot>
          <Slot $w={8}><Sep /></Slot>
          <Slot $w={24}><Borders /></Slot>
          <Slot $w={8}><Caret /></Slot>
          <Slot $w={15}><Sep /></Slot>
          <Slot $w={16}><FillColor /></Slot>
          <Slot $w={18}><Caret /></Slot>
          <Slot $w={16}><FontColor /></Slot>
          <Slot $w={18}><Caret /></Slot>
          <Slot $w={2}><Sep /></Slot>
          <Slot $w={30}><Phonetic /></Slot>
          <Slot $w={2}><Caret /></Slot>
        </ToolRow>
      </Stack>
    </GroupBody>
    <GroupLabel>字体</GroupLabel>
    <Launcher><LauncherIcon /></Launcher>
  </Group>
);

const Group3 = () => (
  <Group $w={239}>
    <GroupBody>
      <Stack $pl={4}>
        <ToolRow $h={23}>
          <Slot $w={22}><VBars y={0} /></Slot>
          <Slot $w={22}><VBars y={3} /></Slot>
          <ActiveSlot $w={22}><VBars y={6} /></ActiveSlot>
          <Slot $w={10}><Sep /></Slot>
          <Slot $w={20}><Orient /></Slot>
          <Slot $w={8}><Caret /></Slot>
          <Slot $w={20} />
          <Slot $w={2}><Sep /></Slot>
          <Slot $w={24}><WrapIcon /></Slot>
          <ToolText>自动换行</ToolText>
        </ToolRow>
        <ToolRow>
          <Slot $w={22}><AlignBars a="l" y={1} /></Slot>
          <Slot $w={22}><AlignBars a="c" y={1} /></Slot>
          <Slot $w={22}><AlignBars a="r" y={1} /></Slot>
          <Slot $w={10}><Sep /></Slot>
          <Slot $w={20}><Indent1 /></Slot>
          <Slot $w={28}><Indent1 rev /></Slot>
          <Slot $w={2}><Sep /></Slot>
          <Slot $w={24}><MergeIcon /></Slot>
          <ToolText>合并后居中</ToolText>
          <Slot $w={25}><Caret /></Slot>
        </ToolRow>
      </Stack>
    </GroupBody>
    <GroupLabel>对齐方式</GroupLabel>
    <Launcher><LauncherIcon /></Launcher>
  </Group>
);

const Group4 = () => (
  <Group $w={140}>
    <GroupBody>
      <Stack $pl={4}>
        <ToolRow $h={23}><Combo $w={131}>常规<Caret /></Combo></ToolRow>
        <ToolRow>
          <Slot $w={20}><Currency /></Slot>
          <Slot $w={15}><Caret /></Slot>
          <Slot $w={20}><BigGlyph>%</BigGlyph></Slot>
          <Slot $w={24}><BoldGlyph>,</BoldGlyph></Slot>
          <Slot $w={7}><Sep /></Slot>
          <Slot $w={22}><DecMore /></Slot>
          <Slot $w={26}><DecLess /></Slot>
        </ToolRow>
      </Stack>
    </GroupBody>
    <GroupLabel>数字</GroupLabel>
    <Launcher><LauncherIcon /></Launcher>
  </Group>
);

const Group5 = () => (
  <Group $w={463}>
    <GroupBody>
      <BigBtn $w={60}>
        <BigIcon><CondFormat /></BigIcon>
        <BigText>条件格式</BigText>
        <BigCaret><Caret /></BigCaret>
      </BigBtn>
      <BigBtn $w={58}>
        <BigIcon><TableFormat /></BigIcon>
        <BigText>套用</BigText>
        <BigText>表格格式<Caret /></BigText>
      </BigBtn>
      <Gallery>
        <StyleGrid>
          <StyleCell $bg="#fff" $fg="#000" $sel>常规</StyleCell>
          <StyleCell $bg="#ffc7ce" $fg="#9c0006">差</StyleCell>
          <StyleCell $bg="#c6efce" $fg="#006100">好</StyleCell>
          <StyleCell $bg="#ffeb9c" $fg="#9c6500">适中</StyleCell>
          <StyleCell $bg="#f2f2f2" $fg="#fa7d00" $b="2px solid #7f7f7f">计算</StyleCell>
          <StyleCell $bg="#a5a5a5" $fg="#fff" $b="3px double #3f3f3f" $big>检查单元格</StyleCell>
        </StyleGrid>
        <GalleryScroll>
          <ScrollCell $off><Triangle dir="u" c="#bdbdbd" /></ScrollCell>
          <ScrollCell><Triangle dir="d" /></ScrollCell>
          <ScrollCell><MoreDown /></ScrollCell>
        </GalleryScroll>
      </Gallery>
    </GroupBody>
    <GroupLabel>样式</GroupLabel>
  </Group>
);

const Group6 = () => (
  <Group $w={135}>
    <GroupBody>
      <Slot $w={5} />
      <BigBtn $w={42}><BigIcon><InsertCells /></BigIcon><BigText>插入</BigText><BigCaret><Caret /></BigCaret></BigBtn>
      <BigBtn $w={42}><BigIcon><DeleteCells /></BigIcon><BigText>删除</BigText><BigCaret><Caret /></BigCaret></BigBtn>
      <BigBtn $w={42}><BigIcon><FormatCells /></BigIcon><BigText>格式</BigText><BigCaret><Caret /></BigCaret></BigBtn>
    </GroupBody>
    <GroupLabel>单元格</GroupLabel>
  </Group>
);

const Group7 = () => (
  <Group $w={231}>
    <GroupBody>
      <SmallCol $pl={8} $w={96}>
        <SmallRow><Slot $w={15}><Sigma /></Slot><ToolText $ml={4}>自动求和</ToolText><CaretBox $ml={8}><Caret /></CaretBox></SmallRow>
        <SmallRow><Slot $w={15}><FillDown /></Slot><ToolText $ml={4}>填充</ToolText><CaretBox $ml={3}><Caret /></CaretBox></SmallRow>
        <SmallRow><Slot $w={15}><Eraser /></Slot><ToolText $ml={4}>清除</ToolText><CaretBox $ml={3}><Caret /></CaretBox></SmallRow>
      </SmallCol>
      <BigBtn $w={62}><BigIcon><SortFilter /></BigIcon><BigText>排序和筛选</BigText><BigCaret><Caret /></BigCaret></BigBtn>
      <BigBtn $w={68}><BigIcon><FindIcon /></BigIcon><BigText>查找和选择</BigText><BigCaret><Caret /></BigCaret></BigBtn>
    </GroupBody>
    <GroupLabel>编辑</GroupLabel>
  </Group>
);

const colors = ['黑色', '酒红色', '咖啡色', '深蓝色', '紫色'];
const sizes = ['18', '20', '22', '24', '26', '28'];

export default function App() {
  return (
    <>
      <Global />
      <Window>
        <TitleBar>
          <Row>
            <Slot $w={21} />
            <Slot $w={16}><Save /></Slot>
            <Slot $w={13} />
            <Slot $w={16}><Undo /></Slot>
            <Slot $w={14}><Caret c="#fff" /></Slot>
            <Slot $w={6} />
            <Slot $w={16}><Redo /></Slot>
            <Slot $w={14}><Caret c="#5f9a78" /></Slot>
            <Slot $w={6} />
            <Slot $w={11}><Customize /></Slot>
          </Row>
          <Title>sku销售详情表 - Excel</Title>
          <EndRow>
            <Slot $w={46.5}><RibbonDisplay /></Slot>
            <Slot $w={46.5}><Minimize /></Slot>
            <Slot $w={46.5}><Maximize /></Slot>
            <Slot $w={46.5}><Close /></Slot>
          </EndRow>
        </TitleBar>
        <TabRow>
          <RibbonTab $w={59}>文件</RibbonTab>
          <RibbonTab $w={51} $ml={4} $active>开始</RibbonTab>
          <RibbonTab $w={54}>插入</RibbonTab>
          <RibbonTab $w={76}>页面布局</RibbonTab>
          <RibbonTab $w={54}>公式</RibbonTab>
          <RibbonTab $w={52}>数据</RibbonTab>
          <RibbonTab $w={54}>审阅</RibbonTab>
          <RibbonTab $w={52}>视图</RibbonTab>
          <TellMe><Bulb />告诉我您想要做什么...</TellMe>
          <Login>登录</Login>
          <Share><ShareIcon />共享</Share>
        </TabRow>
        <Ribbon>
          <Group1 />
          <Group2 />
          <Group3 />
          <Group4 />
          <Group5 />
          <Group6 />
          <Group7 />
          <Collapse><Chevron /></Collapse>
        </Ribbon>
        <FormulaBar>
          <NameBox>V38<Caret /></NameBox>
          <Dots><svg width="3" height="10" viewBox="0 0 3 10"><path d="M1.500 0v2M1.500 4v2M1.500 8v2" stroke="#999" strokeWidth="2" /></svg></Dots>
          <FxBox>
            <Slot $w={36}><svg width="12" height="12" viewBox="0 0 12 12"><path d="M1 1l10 10M11 1 1 11" stroke="#bdbdbd" strokeWidth="1.600" /></svg></Slot>
            <Slot $w={36}><svg width="14" height="12" viewBox="0 0 14 12"><path d="M1 6.500 5 10.500 13 1.500" fill="none" stroke="#bdbdbd" strokeWidth="2.200" /></svg></Slot>
            <Slot $w={36}><FxText>fx</FxText></Slot>
          </FxBox>
          <FormulaInput><ChevronDown /></FormulaInput>
        </FormulaBar>
        <SheetArea>
          <Grid><SheetCells /></Grid>
          <VScroll>
            <ScrollBtn><Triangle dir="u" /></ScrollBtn>
            <VThumb />
            <VTrack />
            <ScrollBtn><Triangle dir="d" /></ScrollBtn>
          </VScroll>

          <ChartFrame>
            <FieldRow>
              <FieldBtn $w={86}>求和项:支付金额</FieldBtn>
              <FieldBtn $w={97}>求和项:支付买家数</FieldBtn>
              <FieldBtn $w={86}>求和项:支付件数</FieldBtn>
              <FieldBtn $w={86}>求和项:加购件数</FieldBtn>
            </FieldRow>
            <Plot />
            <ChartFoot>
              <FieldBtn $w={64}>颜色分类<Triangle dir="d" c="#333" /></FieldBtn>
              <FieldBtn $w={53}>尺寸<Triangle dir="d" c="#333" /><ChartFunnel /></FieldBtn>
              <ZoomBtns>
                <FieldBtn $w={15}><ZoomPlus /></FieldBtn>
                <FieldBtn $w={15}><ZoomMinus /></FieldBtn>
              </ZoomBtns>
            </ChartFoot>
          </ChartFrame>

          <Slicer $top={89}>
            <SlicerHead>
              <SlicerName>颜色分类</SlicerName>
              <SlicerMulti $on><MultiSelect c="#6b6b6b" /></SlicerMulti>
              <ClearFilter />
            </SlicerHead>
            <SlicerList>
              {colors.map(c => <SlicerItem key={c} $on>颜色分类:{c}</SlicerItem>)}
            </SlicerList>
          </Slicer>
          <Slicer $top={340}>
            <SlicerHead>
              <SlicerName>尺寸</SlicerName>
              <SlicerMulti><MultiSelect /></SlicerMulti>
              <ClearFilter on />
            </SlicerHead>
            <SlicerList>
              {sizes.map((s, i) => <SlicerItem key={s} $on={i === 0}>尺寸:{s}寸</SlicerItem>)}
            </SlicerList>
          </Slicer>
          <RedMark />
        </SheetArea>
        <TabBar>
          <Slot $w={15} />
          <TallSlot $w={28}><Triangle dir="l" c="#bdbdbd" /></TallSlot>
          <TallSlot $w={28}><Triangle dir="r" c="#bdbdbd" /></TallSlot>
          <Slot $w={25} />
          <SheetTab>Sheet1</SheetTab>
          <OtherTab>【生意参谋平台】1</OtherTab>
          <TabSep />
          <Slot $w={33} />
          <TallSlot $w={17}><PlusCircle /></TallSlot>
          <HScroll>
            <HScrollBtn><Triangle dir="l" /></HScrollBtn>
            <HThumb />
            <HTrack />
            <HScrollBtn><Triangle dir="r" /></HScrollBtn>
          </HScroll>
        </TabBar>
        <StatusBar>
          就绪
          <StatusRight>
            <ViewBtn $on><GridView /></ViewBtn>
            <ViewBtn><PageView /></ViewBtn>
            <ViewBtn><BreakView /></ViewBtn>
            <Slot $w={15}><Minus /></Slot>
            <ZoomTrack><ZoomThumb /></ZoomTrack>
            <Slot $w={16}><Plus /></Slot>
            <ZoomText>100%</ZoomText>
          </StatusRight>
        </StatusBar>
      </Window>
    </>
  );
}
